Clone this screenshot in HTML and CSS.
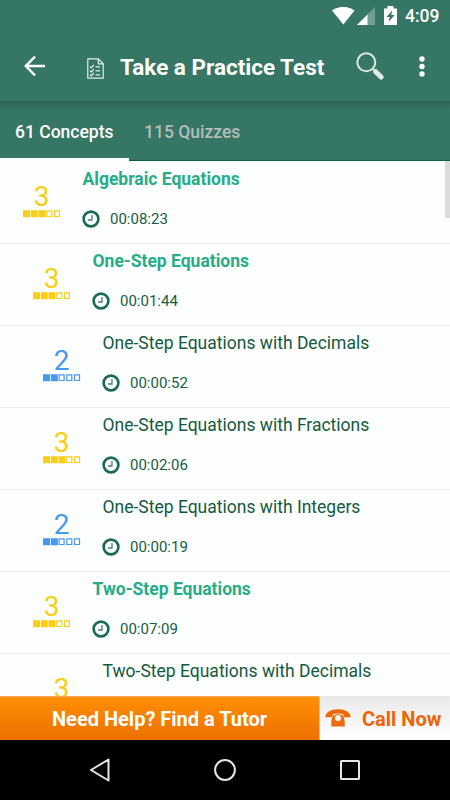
FILE: index.html
```html
<!DOCTYPE html>
<html lang="en">
<head>
<meta charset="utf-8">
<title>Take a Practice Test</title>
<link rel="stylesheet" href="styles.css">
</head>
<body>
<svg class="defs" aria-hidden="true">
  <symbol id="clock" viewBox="0 0 18 18"><circle cx="9" cy="9" r="7.4" fill="none" stroke="#1b6a54" stroke-width="2.6"/><path d="M10 5V10H6" fill="none" stroke="#468270" stroke-width="1.3"/></symbol>
  <symbol id="bars3" viewBox="0 0 38 8"><path d="M0 .3h7v7H0zM7.8.3h7v7h-7zM15.5.3h7v7h-7z" fill="currentColor"/><path d="M23.800.9h5v5.600h-5zM31.500.9h5v5.600h-5z" fill="none" stroke="currentColor" stroke-width="1.2"/></symbol>
  <symbol id="bars2" viewBox="0 0 38 8"><path d="M0 .3h7v7H0zM7.8.3h7v7h-7z" fill="currentColor"/><path d="M16.100.9h5v5.600h-5zM23.800.9h5v5.600h-5zM31.500.9h5v5.600h-5z" fill="none" stroke="currentColor" stroke-width="1.2"/></symbol>
</svg>
<div class="screen">
  <header class="top">
    <div class="status">
      <svg class="wifi" width="23" height="18" viewBox="0 0 23 18"><path d="M0 3.4Q11.3-3.8 22.6 3.4L11.3 17.6z" fill="#fff"/></svg>
      <svg class="signal" width="18" height="18" viewBox="0 0 18 18"><path d="M0 18 18 0v18z" fill="#fff" opacity=".3"/><path d="M0 18 10.5 7.5V18z" fill="#fff"/></svg>
      <svg class="battery" width="13" height="19" viewBox="0 0 13 19"><path d="M0 2.500h3.500V0h6v2.500H13V19H0z" fill="#fff"/><path d="M8.200 4.300 2.600 11h3.200L4.500 15.900 10.700 9H7.300z" fill="#357664"/></svg>
      <span class="time">4:09</span>
    </div>
    <div class="appbar">
      <svg class="back" width="22" height="22" viewBox="0 0 22 22"><path d="M21 11H2.5M11 1.7 1.8 11l9.2 9.3" fill="none" stroke="#fff" stroke-width="2.4"/></svg>
      <svg class="doc" width="17" height="21" viewBox="0 0 17 21"><path d="M.8.8h10.5l4.9 5v14.4H.8zM11.3.8v5h4.9" fill="none" stroke="#e4eeea" stroke-width="1.2"/><path d="m3 8.4 1.3 1.4L6.8 7M3 12.6 4.3 14l2.5-2.8M3 16.4l1.3 1.4L6.8 15M8.5 8.8H13M8.5 12.8H13M8.5 16.8H13" fill="none" stroke="#e4eeea" stroke-width="1.2"/></svg>
      <h1>Take a Practice Test</h1>
      <svg class="search" width="28" height="28" viewBox="0 0 28 28"><circle cx="10.300" cy="10.300" r="9" fill="none" stroke="#dfe9e6" stroke-width="2"/><path d="m16.500 16.500 3 3" stroke="#dfe9e6" stroke-width="2"/><path d="m19.700 19.700 5.400 5.300" stroke="#dfe9e6" stroke-width="5" stroke-linecap="round"/></svg>
      <svg class="more" width="6" height="21" viewBox="0 0 6 21"><g fill="#fff"><circle cx="3" cy="3" r="2.700"/><circle cx="3" cy="10.500" r="2.700"/><circle cx="3" cy="18" r="2.700"/></g></svg>
    </div>
  </header>
  <nav class="tabs">
    <div class="tab active"><span>61 Concepts</span></div>
    <div class="tab"><span>115 Quizzes</span></div>
  </nav>
  <main class="list">
    <div class="scrollbar"></div>
    <div class="row l0"><div class="score gold"><b>3</b><svg><use href="#bars3"/></svg></div><div class="info"><h2>Algebraic Equations</h2><p><svg><use href="#clock"/></svg>00:08:23</p></div></div>
    <div class="row l1"><div class="score gold"><b>3</b><svg><use href="#bars3"/></svg></div><div class="info"><h2>One-Step Equations</h2><p><svg><use href="#clock"/></svg>00:01:44</p></div></div>
    <div class="row l2"><div class="score blue"><b>2</b><svg><use href="#bars2"/></svg></div><div class="info"><h3>One-Step Equations with Decimals</h3><p><svg><use href="#clock"/></svg>00:00:52</p></div></div>
    <div class="row l2"><div class="score gold"><b>3</b><svg><use href="#bars3"/></svg></div><div class="info"><h3>One-Step Equations with Fractions</h3><p><svg><use href="#clock"/></svg>00:02:06</p></div></div>
    <div class="row l2"><div class="score blue"><b>2</b><svg><use href="#bars2"/></svg></div><div class="info"><h3>One-Step Equations with Integers</h3><p><svg><use href="#clock"/></svg>00:00:19</p></div></div>
    <div class="row l1"><div class="score gold"><b>3</b><svg><use href="#bars3"/></svg></div><div class="info"><h2>Two-Step Equations</h2><p><svg><use href="#clock"/></svg>00:07:09</p></div></div>
    <div class="row l2"><div class="score gold"><b>3</b></div><div class="info"><h3>Two-Step Equations with Decimals</h3></div></div>
  </main>
  <div class="actions">
    <div class="tutor"><span>Need Help? Find a Tutor</span></div>
    <div class="call">
      <svg width="26" height="18" viewBox="0 0 26 18"><path d="M.3 8.3C.5 3 6 .3 13 .3S25.500 3 25.700 8.300H18.500V5.500C15 4.300 11 4.300 7.500 5.500V8.300z" fill="#ee6a08"/><path d="M8 6.300h10l1.700 5.500V17.500H6.300V11.800z" fill="#ee6a08"/><circle cx="13" cy="9" r="3.600" fill="#f4f4f4" stroke="#ee6a08" stroke-width="1"/></svg>
      <span>Call Now</span>
    </div>
  </div>
  <footer class="navbar">
    <svg width="22" height="24" viewBox="0 0 22 24"><path d="M19.500 1.500v21L2 12z" fill="none" stroke="#e6e6e6" stroke-width="2" stroke-linejoin="round"/></svg>
    <svg width="22" height="22" viewBox="0 0 22 22"><circle cx="11" cy="11" r="9.900" fill="none" stroke="#e6e6e6" stroke-width="2"/></svg>
    <svg width="20" height="20" viewBox="0 0 20 20"><rect x="1" y="1" width="18" height="18" rx=".5" fill="none" stroke="#e6e6e6" stroke-width="2"/></svg>
  </footer>
</div>
</body>
</html>
```
FILE: styles.css
```css
* { box-sizing: border-box; margin: 0; padding: 0; }
body { font-family: Roboto, "Liberation Sans", sans-serif; background: #000; }
svg { display: block; flex: none; }
span, h1, h2, h3, p { white-space: nowrap; }
.defs { position: absolute; width: 0; height: 0; }
.screen { width: 450px; height: 800px; display: flex; flex-direction: column; overflow: hidden; }

.top { height: 101px; background: #357664; color: #fff; }
.status { height: 32px; display: flex; align-items: flex-start; padding: 6px 0 0 332px; }
.status .wifi { margin-top: 1px; }
.status .signal { margin: 1px 0 0 2px; }
.status .battery { margin-left: 9px; }
.status .time { margin-left: 8px; line-height: 21px; font-size: 17.5px; font-weight: 500; }
.appbar { height: 68px; display: flex; align-items: center; padding-left: 24px; }
.appbar .doc { margin: 5px 0 0 41px; }
.appbar h1 { width: 204px; margin: 2px 0 0 16px; font-size: 22.5px; line-height: 28px; font-weight: 700; }
.appbar .search { margin-left: 32px; }
.appbar .more { margin-left: 35px; }

.tabs { height: 60px; display: flex; border-bottom: 1px solid #075f46; background: linear-gradient(#2c6252, #357664 9px); }
.tab { padding: 0 15px; line-height: 62px; font-size: 17.5px; font-weight: 500; color: #b5bbb8; }
.tab.active { width: 129px; height: 60px; color: #fff; border-bottom: 3px solid #fdfefe; }

.list { position: relative; flex: 1; min-height: 0; overflow: hidden; padding-top: 1px; background: #fdfefe; }
.scrollbar { position: absolute; right: 0; top: 0; width: 5px; height: 57px; background: #dadcdb; }
.row { height: 82px; display: flex; border-bottom: 1px solid #e9eceb; }
.l1 { padding-left: 10px; }
.l2 { padding-left: 20px; }
.score { width: 82.5px; padding: 18px 0 0 22.7px; }
.score b { display: block; width: 38px; height: 30px; line-height: 33px; text-align: center; font-size: 28px; font-weight: 400; }
.score svg { width: 38px; height: 8px; }
.gold { color: #f9ce13; }
.blue { color: #4698ed; }
.info { padding-top: 5px; }
h2, h3 { font-size: 17.5px; line-height: 24px; }
h2 { font-weight: 700; color: #26ad87; }
h3 { font-weight: 400; color: #135a40; }
.info p { display: flex; align-items: center; gap: 10px; margin-top: 19px; height: 18px; font-size: 15px; color: #175d45; }
.info p svg { width: 18px; height: 18px; margin-left: -0.5px; }

.actions { display: flex; height: 44px; font-size: 20px; font-weight: 700; line-height: 46px; }
.tutor { width: 320px; padding-left: 52px; color: #fff; background: linear-gradient(#ff8f05, #ed7000); border-top: 1px solid #f5aa62; border-right: 1px solid #f5b68a; line-height: 44px; }
.call { flex: 1; display: flex; align-items: flex-start; padding-left: 5px; gap: 11px; color: #ee6407; background: linear-gradient(#e9e9e9, #fff); }
.call svg { margin-top: 13px; }
.navbar { height: 60px; display: flex; align-items: center; padding-left: 89px; background: #000; }
.navbar svg + svg { margin-left: 103px; }
.navbar svg:last-child { margin-left: 104px; }
```
